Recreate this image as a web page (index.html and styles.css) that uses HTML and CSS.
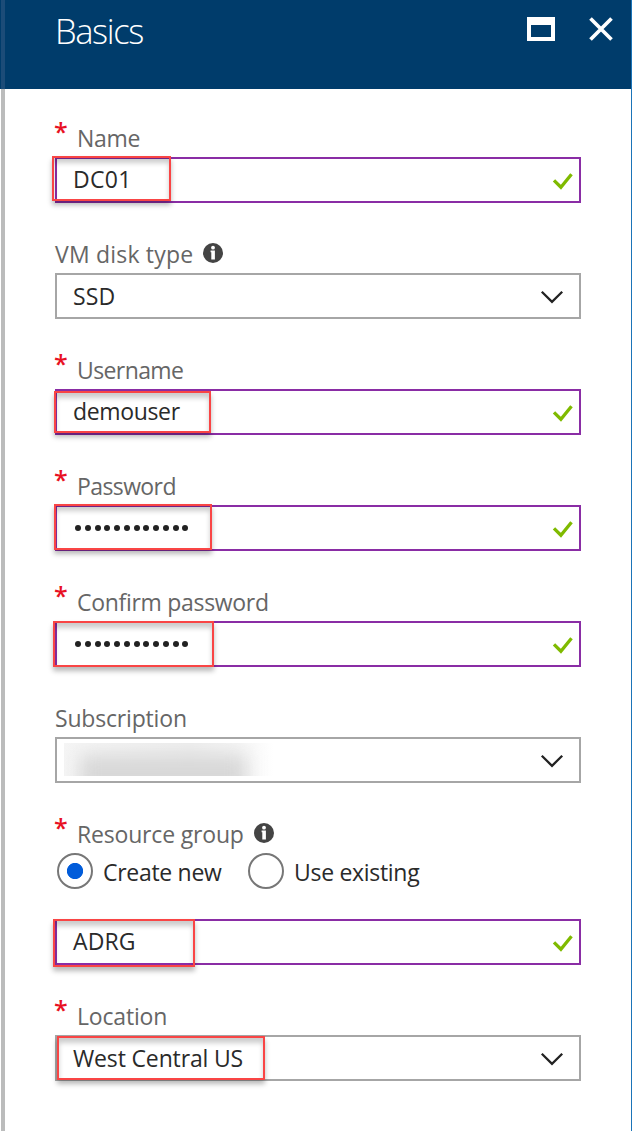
FILE: index.html
```html
<!DOCTYPE html>
<html lang="en">
<head>
<meta charset="utf-8">
<title>Basics</title>
<link rel="stylesheet" href="styles.css">
</head>
<body>
<svg class="defs" width="0" height="0">
  <symbol id="check" viewBox="0 0 24 20"><path d="M2 9.3 8.9 16.2 19.5 3.2" fill="none" stroke="#7fba00" stroke-width="3.3"/></symbol>
  <symbol id="chevron" viewBox="0 0 24 16"><path d="M1.8 1.8 12 11.8 22.2 1.8" fill="none" stroke="#222" stroke-width="2.3"/></symbol>
  <symbol id="info" viewBox="0 0 20 20"><circle cx="10" cy="10" r="10" fill="#444"/><circle cx="10" cy="4.7" r="1.9" fill="#fff"/><path d="M7.6 7.6h4.3v9H8.3V9.3h-.7z" fill="#fff"/></symbol>
</svg>
<main class="blade">
  <header class="header">
    <h1 class="title">Basics</h1>
    <div class="actions">
      <svg width="28" height="24" viewBox="0 0 28 24"><path fill="#fff" fill-rule="evenodd" d="M0 0h28v24H0zM4 8v12h20V8z"/></svg>
      <svg width="24" height="24" viewBox="0 0 24 24"><path d="M1.5 1.5l21 21M22.5 1.5l-21 21" stroke="#fff" stroke-width="3.7"/></svg>
    </div>
  </header>
  <form class="form">
    <div class="field">
      <div class="label"><span class="star">*</span><span class="t-name">Name</span></div>
      <div class="box valid"><span class="value t-dc">DC01</span><svg class="check"><use href="#check"/></svg><i class="mark m-name"></i></div>
    </div>
    <div class="field">
      <div class="label"><span class="t-disk">VM disk type</span><svg class="info"><use href="#info"/></svg></div>
      <div class="box select"><span class="value t-ssd">SSD</span><svg class="chevron"><use href="#chevron"/></svg></div>
    </div>
    <div class="field">
      <div class="label"><span class="star">*</span><span class="t-user">Username</span></div>
      <div class="box valid"><span class="value t-demo">demouser</span><svg class="check"><use href="#check"/></svg><i class="mark m-user"></i></div>
    </div>
    <div class="field">
      <div class="label"><span class="star">*</span><span class="t-pass">Password</span></div>
      <div class="box valid"><span class="dots"><i></i><i></i><i></i><i></i><i></i><i></i><i></i><i></i><i></i><i></i><i></i><i></i></span><svg class="check"><use href="#check"/></svg><i class="mark m-pass"></i></div>
    </div>
    <div class="field">
      <div class="label"><span class="star">*</span><span class="t-confirm">Confirm password</span></div>
      <div class="box valid"><span class="dots"><i></i><i></i><i></i><i></i><i></i><i></i><i></i><i></i><i></i><i></i><i></i><i></i></span><svg class="check"><use href="#check"/></svg><i class="mark m-confirm"></i></div>
    </div>
    <div class="field">
      <div class="label"><span class="t-sub">Subscription</span></div>
      <div class="box select"><span class="redacted"><i class="smudge"></i></span><svg class="chevron"><use href="#chevron"/></svg></div>
    </div>
    <div class="field">
      <div class="label"><span class="star">*</span><span class="t-rg">Resource group</span><svg class="info"><use href="#info"/></svg></div>
      <div class="radios">
        <span class="radio on"></span><span class="option first">Create new</span>
        <span class="radio"></span><span class="option">Use existing</span>
      </div>
      <div class="box valid"><span class="value t-adrg">ADRG</span><svg class="check"><use href="#check"/></svg><i class="mark m-rg"></i></div>
    </div>
    <div class="field">
      <div class="label"><span class="star">*</span><span class="t-loc">Location</span></div>
      <div class="box select"><span class="value t-west">West Central US</span><svg class="chevron"><use href="#chevron"/></svg><i class="mark m-loc"></i></div>
    </div>
  </form>
</main>
</body>
</html>
```
FILE: styles.css
```css
* { box-sizing: border-box; }
body {
  margin: 0;
  background: #fff;
  font-family: "Open Sans", "Noto Sans", sans-serif;
  font-size: 23px;
  color: #2a2a2a;
}
.defs { position: absolute; }
.blade {
  height: 1131px;
  margin-left: 1px;
  border-left: 4px solid #bbbcbc;
  border-right: 1px solid #1b74b8;
}
.header {
  display: flex;
  justify-content: space-between;
  height: 89px;
  margin-left: -4px;
  padding: 0 18px 0 50px;
  background: #003c6b;
  border-left: 4px solid #1c4c78;
  box-shadow: -1px 0 #003c6b;
}
.title {
  margin: 7px 0 0;
  font-size: 34.5px;
  line-height: 48px;
  font-weight: 300;
  letter-spacing: -1.4px;
  color: #fff;
}
.actions { display: flex; gap: 34px; padding-top: 17px; }
.form {
  display: flex;
  flex-direction: column;
  gap: 34px;
  padding: 32px 50px 0;
}
.label {
  display: flex;
  height: 36px;
  line-height: 34px;
  color: #666;
  white-space: nowrap;
}
.star {
  width: 22px;
  height: 34px;
  margin-left: -1px;
  margin-right: 1px;
  font-size: 25px;
  line-height: 20px;
  font-weight: 600;
  color: #e81123;
}
.info { width: 20px; height: 20px; margin: 6px 0 0 10px; }
.box {
  position: relative;
  display: flex;
  justify-content: space-between;
  height: 46px;
  padding: 0 15px 0 16px;
  border: 2px solid #a6a6a6;
  line-height: 41px;
  white-space: nowrap;
}
.select { line-height: 43px; }
.valid { border-color: #8a2da5; padding-right: 3px; }
.check { width: 24px; height: 20px; margin-top: 12px; }
.chevron { width: 24px; height: 16px; margin-top: 15px; }
.mark {
  position: absolute;
  border: 2px solid #f94545;
  box-shadow: 0 4px 5px rgba(0,0,0,.28), inset 0 5px 5px rgba(0,0,0,.2);
}
.m-name { left: -5px; top: -3px; width: 119px; height: 45px; }
.m-user { left: -3px; top: 0; width: 157px; height: 42px; }
.m-pass { left: -3px; top: -3px; width: 158px; height: 46px; }
.m-confirm { left: -4px; top: -2px; width: 161px; height: 46px; }
.m-rg { left: -4px; top: -2px; width: 142px; height: 48px; }
.m-loc { left: 0; top: -1px; width: 208px; height: 44px; }
.dots { display: flex; gap: 3.76px; padding: 18px 0 0 2px; }
.dots i { width: 6px; height: 6px; border-radius: 50%; background: #222; }
.redacted {
  width: 210px;
  height: 33px;
  margin: 4px 0 0 -9px;
  overflow: hidden;
  background: linear-gradient(90deg, #f5f5f5, #eee 60%, #f4f4f4 82%, #fff);
}
.smudge {
  display: block;
  width: 166px;
  height: 40px;
  margin: 12px 0 0 16px;
  background: #d8d8d8;
  filter: blur(9px);
}
.radios { display: flex; height: 36px; margin-bottom: 30px; padding-left: 2px; line-height: 39px; white-space: nowrap; }
.radio { width: 36px; height: 36px; border: 2px solid #777; border-radius: 50%; }
.on { background: radial-gradient(circle, #015cda 7.7px, transparent 8.5px); }
.option { padding-left: 10px; letter-spacing: -.3px; }
.first { width: 155px; }
.t-name, .t-confirm { letter-spacing: -.3px; }
.t-user, .t-pass { letter-spacing: -.6px; }
.t-disk { letter-spacing: .2px; }
.t-sub, .t-rg, .t-loc { letter-spacing: -.18px; }
.t-dc { letter-spacing: .3px; }
.t-ssd, .t-adrg { letter-spacing: .1px; }
.t-demo { letter-spacing: -.35px; }
.t-west { letter-spacing: -.15px; }
```
